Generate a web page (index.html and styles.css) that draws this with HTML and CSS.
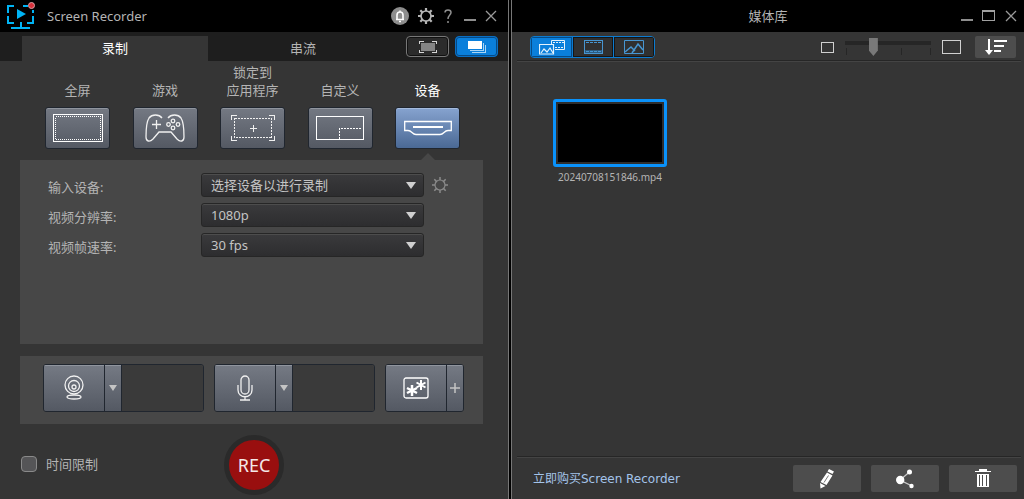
FILE: index.html
```html
<!DOCTYPE html>
<html lang="zh-CN">
<head>
    <meta charset="UTF-8">
    <meta name="viewport" content="width=device-width, initial-scale=1.0">
    <title>Screen Recorder</title>
    <link rel="stylesheet" href="styles.css">
</head>
<body>
    <main class="recorder">
        <header class="titlebar">
            <svg class="logo" width="28" height="28" viewBox="0 0 28 28">
                <g fill="none" stroke="#00b4f5" stroke-width="2">
                    <path d="M1 11V4h6M1 14v7h6M16 4h5M26 8v3M20 21h6v-7M14 20v6M4 26h19"/>
                </g>
                <path d="M10 7l9 5-9 5z" fill="#00b4f5"/>
                <circle cx="24.500" cy="3.500" r="3" fill="#d8323c" stroke="#d9a0a5"/>
            </svg>
            <h1>Screen Recorder</h1>
            <div class="window-buttons">
                <button aria-label="通知">
                    <svg width="18" height="18" viewBox="0 0 18 18">
                        <circle cx="9" cy="9" r="9" fill="#8d8d8d"/>
                        <path d="M5 12.500h8M6 12V8a3 3 0 0 1 6 0v4M8 14.500h2M9 3.500v2" fill="none" stroke="#fff" stroke-width="1.600"/>
                    </svg>
                </button>
                <button aria-label="设置">
                    <svg width="16" height="16" viewBox="0 0 16 16" fill="none" stroke="#b4b4b4">
                        <circle cx="8" cy="8" r="5" stroke-width="1.700"/>
                        <path d="M8 0v3M8 13v3M0 8h3M13 8h3M2.300 2.300l2.100 2.100M11.600 11.600l2.100 2.100M2.300 13.700l2.100-2.100M11.600 4.400l2.100-2.100" stroke-width="2.200"/>
                    </svg>
                </button>
                <button aria-label="帮助">
                    <svg width="12" height="14" viewBox="0 0 12 14" fill="none" stroke="#8e8e8e" stroke-width="1.500">
                        <path d="M2 3.500C2 .2 8 .2 8 3.500 8 6 5 6 5 10M5 12v2"/>
                    </svg>
                </button>
                <button aria-label="最小化">
                    <svg width="12" height="12" viewBox="0 0 12 12"><path d="M0 10h12" stroke="#8e8e8e" stroke-width="2"/></svg>
                </button>
                <button aria-label="关闭">
                    <svg width="12" height="12" viewBox="0 0 12 12"><path d="M1 1l10 10M11 1L1 11" stroke="#9a9a9a" stroke-width="1.300"/></svg>
                </button>
            </div>
        </header>

        <nav class="tabs">
            <button class="tab active">录制</button>
            <button class="tab">串流</button>
            <div class="view-buttons">
                <button class="view-btn" aria-label="迷你视图">
                    <svg width="18" height="12" viewBox="0 0 18 12" shape-rendering="crispEdges">
                        <path d="M2 2h14v8H2z" fill="#858585"/>
                        <path d="M.5 3V.5H5M13 .5h4.500V3M17.500 9v2.500H13M5 11.500H.5V9" fill="none" stroke="#d5d5d5"/>
                    </svg>
                </button>
                <button class="view-btn active" aria-label="媒体库视图">
                    <svg width="18" height="12" viewBox="0 0 18 12" shape-rendering="crispEdges">
                        <path d="M0 0h14v8H0z" fill="#fff"/>
                        <path d="M2 9.500h13.500V2M4 11.500h13.500V4" fill="none" stroke="#a9d5f5"/>
                    </svg>
                </button>
            </div>
        </nav>

        <section class="modes">
            <button class="mode">
                <span class="mode-label">全屏</span>
                <span class="mode-icon">
                    <svg width="52" height="30" viewBox="0 0 52 30" fill="none" stroke="#fff" shape-rendering="crispEdges">
                        <path d="M1.500 1.500h49v27h-49z"/>
                        <path d="M3.500 3.500h45v23h-45z" stroke-dasharray="1 1"/>
                    </svg>
                </span>
            </button>
            <button class="mode">
                <span class="mode-label">游戏</span>
                <span class="mode-icon">
                    <svg width="40" height="30" viewBox="0 0 40 30" fill="none" stroke="#f0f0f0" stroke-width="1.300">
                        <path d="M17 5C14 1 7 1 4 5 2 8 1 18 1 24c0 5 4 5 7 2l6-7h12l6 7c3 3 7 3 7-2 0-6-1-16-3-19C33 1 26 1 23 5"/>
                        <path d="M11.500 7v9M7 11.500h9"/>
                        <circle cx="28" cy="8" r="1.800"/>
                        <circle cx="28" cy="15" r="1.800"/>
                        <circle cx="23.500" cy="11.500" r="1.800"/>
                        <circle cx="33" cy="11.500" r="1.800"/>
                    </svg>
                </span>
            </button>
            <button class="mode">
                <span class="mode-label">锁定到<br>应用程序</span>
                <span class="mode-icon">
                    <svg width="44" height="28" viewBox="0 0 44 28" fill="none" stroke="#f0f0f0" shape-rendering="crispEdges">
                        <path d="M.5 6V1.500H6M38 1.500h5.500V6M43.500 22v4.500H38M6 26.500H.5V22"/>
                        <path d="M3.500 4.500h37v19h-37z" stroke-dasharray="2 1"/>
                        <path d="M22.500 11v7M19 14.500h7"/>
                    </svg>
                </span>
            </button>
            <button class="mode">
                <span class="mode-label">自定义</span>
                <span class="mode-icon">
                    <svg width="48" height="26" viewBox="0 0 48 26" fill="none" stroke="#fff" shape-rendering="crispEdges">
                        <path d="M.5 1.500h47v23H.5z"/>
                        <path d="M23.500 24V13.500H46" stroke-dasharray="2 1"/>
                    </svg>
                </span>
            </button>
            <button class="mode active">
                <span class="mode-label">设备</span>
                <span class="mode-icon">
                    <svg width="48" height="16" viewBox="0 0 48 16" fill="none" stroke="#fff">
                        <path d="M.7 1.500h46.600v9H44c-4 0-4 4-8 4H12c-4 0-4-4-8-4H.7z" stroke-width="1.300"/>
                        <path d="M9 7h30" stroke-width="2"/>
                    </svg>
                </span>
            </button>
        </section>

        <section class="panel settings">
            <label for="device">输入设备:</label>
            <span class="dropdown">
                <select id="device"><option>选择设备以进行录制</option></select>
            </span>
            <button class="gear-btn" aria-label="设备设置">
                <svg width="16" height="16" viewBox="0 0 16 16" fill="none" stroke="#8b8b8b">
                    <circle cx="8" cy="8" r="5" stroke-width="1.200"/>
                    <path d="M8 0v3M8 13v3M0 8h3M13 8h3M2.300 2.300l2.100 2.100M11.600 11.600l2.100 2.100M2.300 13.700l2.100-2.100M11.600 4.400l2.100-2.100" stroke-width="1.500"/>
                </svg>
            </button>
            <label for="resolution">视频分辨率:</label>
            <span class="dropdown">
                <select id="resolution"><option>1080p</option></select>
            </span>
            <label for="framerate">视频帧速率:</label>
            <span class="dropdown">
                <select id="framerate"><option>30 fps</option></select>
            </span>
        </section>

        <section class="panel sources">
            <div class="source">
                <button class="source-main" aria-label="摄像头">
                    <svg width="20" height="26" viewBox="0 0 20 26" fill="none" stroke="#f0f0f0" stroke-width="1.300">
                        <circle cx="10" cy="10" r="9"/>
                        <circle cx="10" cy="11" r="5.500"/>
                        <circle cx="10" cy="12" r="2"/>
                        <ellipse cx="10" cy="22" rx="7" ry="2"/>
                    </svg>
                </button>
                <button class="source-more" aria-label="摄像头选项"><span class="triangle"></span></button>
                <div class="preview"></div>
            </div>
            <div class="source">
                <button class="source-main" aria-label="麦克风">
                    <svg width="16" height="26" viewBox="0 0 16 26" fill="none" stroke="#f0f0f0" stroke-width="1.300">
                        <rect x="4" y="1" width="8" height="18" rx="4"/>
                        <path d="M1 10v5c0 9 14 9 14 0v-5M8 21.500V25M3 25h10"/>
                    </svg>
                </button>
                <button class="source-more" aria-label="麦克风选项"><span class="triangle"></span></button>
                <div class="preview"></div>
            </div>
            <div class="source effects">
                <button class="source-main" aria-label="特效">
                    <svg width="26" height="22" viewBox="0 0 26 22" fill="none" stroke="#fff">
                        <rect x="1" y="1" width="24" height="20" rx="2" stroke-width="1.300"/>
                        <path d="M9 8v11M4 11l10 5M4 16l10-5" stroke-width="2.500"/>
                        <path d="M18 3v10M13.500 5.500l9 5M13.500 10.500l9-5" stroke-width="2"/>
                    </svg>
                </button>
                <button class="source-more" aria-label="添加特效">
                    <svg width="12" height="12" viewBox="0 0 12 12"><path d="M6 1v10M1 6h10" stroke="#c4c4c4" stroke-width="1.500"/></svg>
                </button>
            </div>
        </section>

        <footer class="record-bar">
            <label class="time-limit"><input type="checkbox">时间限制</label>
            <button class="rec-btn">REC</button>
        </footer>
    </main>

    <aside class="library">
        <header class="titlebar">
            <h2>媒体库</h2>
            <div class="window-buttons">
                <button aria-label="最小化">
                    <svg width="12" height="12" viewBox="0 0 12 12"><path d="M0 10h12" stroke="#8e8e8e" stroke-width="2"/></svg>
                </button>
                <button aria-label="最大化">
                    <svg width="14" height="12" viewBox="0 0 14 12" shape-rendering="crispEdges"><path d="M.5.5h12v10H.5zM0 1.500h13" fill="none" stroke="#a0a0a0"/></svg>
                </button>
                <button aria-label="关闭">
                    <svg width="12" height="12" viewBox="0 0 12 12"><path d="M1 1l10 10M11 1L1 11" stroke="#9a9a9a" stroke-width="1.300"/></svg>
                </button>
            </div>
        </header>

        <div class="toolbar">
            <div class="filters">
                <button class="active" aria-label="全部媒体">
                    <svg width="26" height="15" viewBox="0 0 26 15" fill="none" stroke="#e4f2fc">
                        <path d="M12.500 4V.5h13v9H16"/>
                        <path d="M14 2.500h11M16 7.500h9" stroke-dasharray="2 1"/>
                        <path d="M.5 4.500h14v9.500H.5z" stroke-width="1.200"/>
                        <path d="M2 13l3-4 3 3 3-4 3 5" stroke-width="1.200"/>
                    </svg>
                </button>
                <button aria-label="视频">
                    <svg width="19" height="14" viewBox="0 0 19 14" fill="none" stroke="#4795d0" shape-rendering="crispEdges">
                        <path d="M1 10h17v3H1z" fill="#2c5b80" stroke="none"/>
                        <path d="M.5.5h18v13H.5z"/>
                        <path d="M2 2.500h15M2 11.500h15" stroke-dasharray="3 1"/>
                    </svg>
                </button>
                <button aria-label="图片">
                    <svg width="20" height="14" viewBox="0 0 20 14" fill="none" stroke="#4795d0">
                        <path d="M.5.5h19v13H.5z"/>
                        <path d="M1 12l6-5 4 4M8 13l6-9 5 6" stroke-width="1.500"/>
                    </svg>
                </button>
            </div>
            <div class="size-control">
                <span class="size-small"></span>
                <input type="range" min="0" max="100" value="31" aria-label="缩略图大小">
                <span class="size-large"></span>
            </div>
            <button class="tool-btn sort-btn" aria-label="排序">
                <svg width="22" height="16" viewBox="0 0 22 16" fill="none" stroke="#fff" stroke-width="2">
                    <path d="M4 0v12M9 2h13M9 7h10M9 12h7"/>
                    <path d="M0 11h8l-4 5z" fill="#fff" stroke="none"/>
                </svg>
            </button>
        </div>

        <div class="media-grid">
            <figure class="media-item">
                <div class="thumb"></div>
                <figcaption>20240708151846.mp4</figcaption>
            </figure>
        </div>

        <footer class="library-footer">
            <a class="buy-link" href="#">立即购买Screen Recorder</a>
            <button class="tool-btn" aria-label="编辑">
                <svg width="14" height="20" viewBox="0 0 14 20">
                    <path d="M7.500 2.500L9 0l5 2.500L12.500 5zM7 3.500l5.500 3-6 9.500-6-3zM0 14l5.500 3L.5 19.500z" fill="#fff"/>
                    <path d="M8.500 6.500l-4.500 7" stroke="#777" fill="none"/>
                </svg>
            </button>
            <button class="tool-btn" aria-label="分享">
                <svg width="18" height="20" viewBox="0 0 18 20" fill="#fff">
                    <path d="M13.500 3L4 11l12 6" fill="none" stroke="#ccc" stroke-width="1.300"/>
                    <circle cx="13.500" cy="3" r="2.500"/>
                    <circle cx="4.200" cy="11" r="4.200"/>
                    <circle cx="15.500" cy="17" r="2.200"/>
                </svg>
            </button>
            <button class="tool-btn" aria-label="删除">
                <svg width="16" height="19" viewBox="0 0 16 19" shape-rendering="crispEdges">
                    <path d="M4 0h8v2h4v1H0V2h4zM2 5h12v13H2z" fill="#fff"/>
                    <path d="M4.500 6v11M7.500 6v11M11.500 6v11" fill="none" stroke="#4d4d4d"/>
                </svg>
            </button>
        </footer>
    </aside>
</body>
</html>
```

FILE: styles.css
```css
* {
    margin: 0;
    padding: 0;
    box-sizing: border-box;
}

body {
    display: grid;
    grid-template-columns: 509fr 513fr;
    gap: 2px;
    min-height: 100vh;
    background: #000;
    color: #b4b4b4;
    font-family: "Noto Sans", "Noto Sans CJK SC", sans-serif;
    font-size: 13px;
    line-height: 18px;
}

button,
select,
input {
    font: inherit;
    color: inherit;
}

button {
    display: flex;
    align-items: center;
    justify-content: center;
    border: none;
    background: none;
    cursor: pointer;
}

svg {
    display: block;
    flex-shrink: 0;
}

.recorder,
.library {
    display: flex;
    flex-direction: column;
    background: #353535;
}

.recorder {
    border-right: 1px solid #777;
}

.library {
    border-left: 1px solid #777;
}

/* title bars */
.titlebar {
    display: flex;
    align-items: center;
    height: 32px;
    background: #000;
}

.titlebar h1,
.titlebar h2 {
    flex: 1;
    font-size: 13px;
    font-weight: normal;
}

.logo {
    margin: 0 12px 0 7px;
}

.window-buttons {
    display: flex;
    align-items: center;
    gap: 9px;
    padding: 0 11px 1px 0;
}

.library .titlebar {
    display: grid;
    grid-template-columns: 1fr auto 1fr;
}

.library .titlebar h2 {
    grid-column: 2;
}

.library .window-buttons {
    justify-self: end;
    padding-right: 7px;
}

/* tabs */
.tabs {
    display: flex;
    align-items: flex-end;
    gap: 2px;
    height: 29px;
    padding: 0 10px 0 22px;
    background: #1e1e1e;
}

.tab {
    flex: 0 1 186px;
    height: 25px;
    padding-bottom: 2px;
}

.tab.active {
    background: #353535;
    color: #fff;
}

.view-buttons {
    display: flex;
    gap: 6px;
    margin: 0 0 4px auto;
}

.view-btn {
    width: 43px;
    height: 21px;
    border: 1px solid #777;
    border-radius: 4px;
    background: #2b2b2b;
    box-shadow: inset 0 0 0 1px #111;
}

.view-btn.active {
    border-color: #0a6fc4;
    background: #0a7fdb;
    box-shadow: inset 0 0 0 1px #064a85;
}

/* capture modes */
.modes {
    display: flex;
    justify-content: space-between;
    padding: 2px 48px 11px 45px;
}

.mode {
    position: relative;
    flex-direction: column;
    gap: 8px;
    width: 65px;
}

.mode-label {
    display: flex;
    align-items: flex-end;
    height: 36px;
}

.mode-icon {
    display: flex;
    align-items: center;
    justify-content: center;
    width: 65px;
    height: 42px;
    border: 1px solid #20262f;
    border-radius: 3px;
    background: linear-gradient(#747983, #545963);
    box-shadow: inset 0 1px #90959e;
}

.mode.active .mode-label {
    color: #fff;
}

.mode.active .mode-icon {
    background: linear-gradient(#86a3cf, #4a6995);
    box-shadow: inset 0 1px #a5bbdd;
}

.mode.active::after {
    content: "";
    position: absolute;
    bottom: -11px;
    border: 7px solid transparent;
    border-top: none;
    border-bottom-color: #474747;
}

/* panels */
.panel {
    margin: 0 25px 0 20px;
    background: #474747;
}

.settings {
    flex: 1;
    display: grid;
    grid-template-columns: 153px minmax(120px, 223px) 32px;
    grid-auto-rows: 24px;
    align-items: center;
    row-gap: 6px;
    padding: 13px 20px 13px 28px;
}

.settings label {
    grid-column: 1;
    padding-top: 3px;
}

.dropdown {
    position: relative;
}

.dropdown select {
    display: block;
    width: 100%;
    height: 24px;
    padding: 0 28px 0 9px;
    appearance: none;
    border: 1px solid #262626;
    border-radius: 3px;
    background: linear-gradient(#3a3a3c, #2d2d2f);
    box-shadow: inset 0 1px #4d4d4d;
    color: #c4c4c4;
}

.dropdown::after {
    content: "";
    position: absolute;
    top: 9px;
    right: 8px;
    border: 5px solid transparent;
    border-top: 7px solid #d0d0d0;
    border-bottom: none;
    pointer-events: none;
}

.sources {
    display: flex;
    justify-content: space-between;
    margin-top: 12px;
    padding: 8px 19px 12px 23px;
}

.source {
    display: flex;
    height: 48px;
    border: 1px solid #20262f;
    border-radius: 3px;
    overflow: hidden;
}

.source-main,
.source-more {
    background: linear-gradient(#757a84, #545963);
    box-shadow: inset 0 1px #90959e;
}

.source-main {
    width: 60px;
}

.source-more {
    width: 17px;
    border-left: 1px solid #20262f;
}

.triangle {
    border: 4px solid transparent;
    border-top: 6px solid #c4c4c4;
    border-bottom: none;
}

.preview {
    width: 82px;
    border-left: 1px solid #20262f;
    background: #3a3a3a;
}

/* record bar */
.record-bar {
    display: grid;
    grid-template-columns: 1fr auto 1fr;
    align-items: center;
    padding: 11px 0 4px;
}

.time-limit {
    display: flex;
    align-items: center;
    gap: 9px;
    padding: 0 0 2px 21px;
}

.time-limit input {
    width: 16px;
    height: 16px;
    appearance: none;
    border: 1px solid #8a8a8a;
    border-radius: 4px;
    background: #555557;
}

.time-limit input:checked {
    background: #0a7fdb;
}

.rec-btn {
    width: 60px;
    height: 60px;
    border: 5px solid #2a2a2a;
    border-radius: 50%;
    background: #990f0f;
    color: #f4e8e8;
    font-size: 18px;
}

/* media library */
.toolbar {
    display: flex;
    align-items: center;
    margin: 0 3px 0 5px;
    padding: 4px 5px 2px 13px;
    border-bottom: 1px solid #262626;
    box-shadow: 0 1px #444;
}

.filters {
    display: flex;
    border: 1px solid #0c7bd0;
    border-radius: 4px;
    overflow: hidden;
}

.filters button {
    width: 41px;
    height: 20px;
    background: #303030;
    box-shadow: inset 0 0 0 1px #151515;
}

.filters button + button {
    border-left: 1px solid #0c7bd0;
}

.filters .active {
    background: #0a7fdb;
    box-shadow: inset 0 0 0 1px #064a85;
}

.size-control {
    display: flex;
    align-items: center;
    gap: 11px;
    margin: 0 14px 0 auto;
}

.size-small,
.size-large {
    width: 13px;
    height: 11px;
    border: 1px solid #d0d0d0;
}

.size-large {
    width: 19px;
    height: 14px;
}

.size-control input {
    width: 86px;
    height: 18px;
    appearance: none;
    background:
        linear-gradient(#262626, #262626) 0 3px / 100% 4px no-repeat,
        linear-gradient(#262626, #262626) 1px 10px / 1px 7px no-repeat,
        linear-gradient(#262626, #262626) 56px 10px / 1px 7px no-repeat,
        linear-gradient(#262626, #262626) 85px 10px / 1px 7px no-repeat;
}

.size-control input::-webkit-slider-thumb {
    appearance: none;
    width: 9px;
    height: 18px;
    background: #797979;
    clip-path: polygon(0 0, 100% 0, 100% 70%, 50% 100%, 0 70%);
}

.tool-btn {
    width: 68px;
    height: 27px;
    border-radius: 2px;
    background: #4d4d4d;
}

.sort-btn {
    width: 41px;
    height: 22px;
}

.media-grid {
    flex: 1;
    display: flex;
    flex-wrap: wrap;
    align-content: flex-start;
    gap: 20px;
    padding: 38px 41px;
}

.thumb {
    width: 114px;
    height: 68px;
    padding: 2px;
    border: 3px solid #0a92fa;
    border-radius: 3px;
    background:
        linear-gradient(#000, #000) content-box,
        #2e2e2e;
}

.media-item figcaption {
    padding-top: 2px;
    font-size: 10px;
    line-height: 16px;
    text-align: center;
}

.library-footer {
    display: flex;
    align-items: center;
    gap: 10px;
    margin: 0 3px 0 5px;
    padding: 8px 4px 7px 16px;
    border-top: 1px solid #262626;
    box-shadow: inset 0 1px #444;
}

.buy-link {
    margin-right: auto;
    color: #a4c4ea;
    font-family: "DejaVu Sans", "Noto Sans CJK SC", sans-serif;
    font-size: 12px;
    text-decoration: none;
}

@media (max-width: 800px) {
    body {
        grid-template-columns: 1fr;
    }
}
```
